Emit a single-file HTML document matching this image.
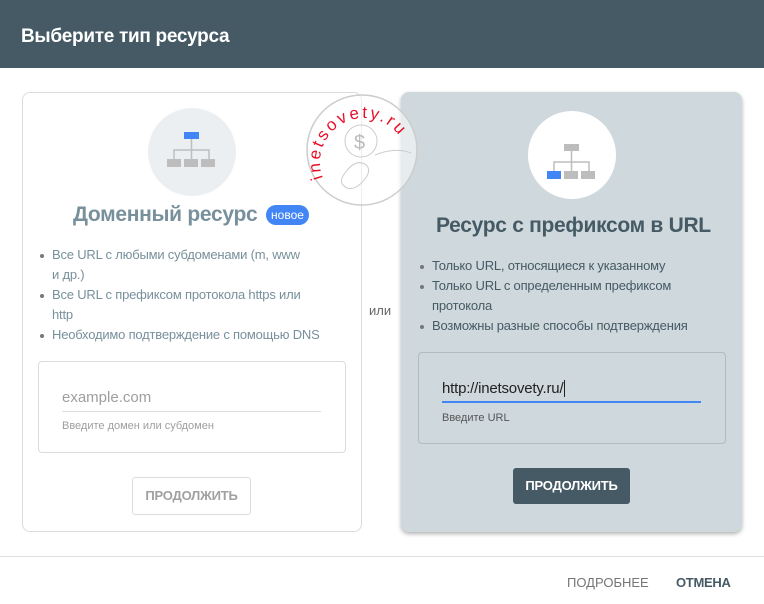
<!DOCTYPE html>
<html><head><meta charset="utf-8"><style>
*{margin:0;padding:0;box-sizing:border-box}
body{width:764px;height:604px;background:#fff;font-family:"Liberation Sans",sans-serif;position:relative;overflow:hidden}
.abs{position:absolute}
.hdr{left:0;top:0;width:764px;height:68px;background:#455a64;color:#fff;font-size:19px;font-weight:bold;padding:26px 0 0 21px;letter-spacing:-0.3px}
.card{border-radius:8px}
ul{list-style:none;font-size:13px;line-height:20px;letter-spacing:-0.2px}
li{position:relative;padding-left:14px}
li:before{content:"";position:absolute;left:2px;top:9px;width:4px;height:4px;border-radius:50%;background:#777}
.btn{font-size:13px;font-weight:bold;text-align:center;border-radius:3px;letter-spacing:-0.2px}
</style></head><body>
<div class="abs hdr">Выберите тип ресурса</div>

<div class="abs card" style="left:22px;top:92px;width:340px;height:440px;border:1px solid #dadce0"></div>
<div class="abs" style="left:148px;top:108px;width:88px;height:88px;border-radius:50%;background:#eceff1"></div>
<svg class="abs" style="left:166px;top:130px" width="52" height="40">
<rect x="18" y="2" width="15" height="7" fill="#4285f4"/>
<path d="M25.5 9V20M8 29V20H43V29M25.5 20V29" stroke="#bdbdbd" stroke-width="1.5" fill="none"/>
<rect x="1" y="29" width="14" height="8" fill="#bdbdbd"/><rect x="18" y="29" width="14" height="8" fill="#bdbdbd"/><rect x="35" y="29" width="14" height="8" fill="#bdbdbd"/>
</svg>
<div class="abs" style="left:73px;top:203px;font-size:21px;font-weight:bold;color:#78909c;letter-spacing:-0.3px">Доменный ресурс</div>
<div class="abs" style="left:266px;top:205px;width:43px;height:20px;border-radius:10px;background:#4285f4;color:#fff;font-size:12px;text-align:center;line-height:20px">новое</div>
<ul class="abs" style="left:38px;top:245px;width:285px;color:#78909c">
<li>Все URL с любыми субдоменами (m, www и&nbsp;др.)</li>
<li>Все URL с префиксом протокола https или http</li>
<li>Необходимо подтверждение с помощью DNS</li></ul>
<div class="abs" style="left:38px;top:361px;width:308px;height:92px;border:1px solid #dadce0;border-radius:4px"></div>
<div class="abs" style="left:62px;top:389px;font-size:15px;color:#9e9e9e">example.com</div>
<div class="abs" style="left:62px;top:411px;width:259px;height:1px;background:#ddd"></div>
<div class="abs" style="left:62px;top:420px;font-size:11px;color:#9e9e9e">Введите домен или субдомен</div>
<div class="abs btn" style="left:132px;top:477px;width:119px;height:38px;border:1px solid #dadce0;color:#a0a0a0;line-height:36px">ПРОДОЛЖИТЬ</div>

<div class="abs" style="left:369px;top:303px;font-size:13px;color:#666">или</div>

<div class="abs card" style="left:401px;top:92px;width:341px;height:440px;background:#cfd8dc;box-shadow:0 2px 4px rgba(0,0,0,.3)"></div>
<div class="abs" style="left:528px;top:111px;width:88px;height:88px;border-radius:50%;background:#fff"></div>
<svg class="abs" style="left:546px;top:142px" width="52" height="40">
<rect x="18" y="2" width="15" height="7" fill="#bdbdbd"/>
<path d="M25.5 9V20M8 29V20H43V29M25.5 20V29" stroke="#bdbdbd" stroke-width="1.5" fill="none"/>
<rect x="1" y="29" width="14" height="8" fill="#4285f4"/><rect x="18" y="29" width="14" height="8" fill="#bdbdbd"/><rect x="35" y="29" width="14" height="8" fill="#bdbdbd"/>
</svg>
<div class="abs" style="left:436px;top:214px;font-size:21px;font-weight:bold;color:#455a64;letter-spacing:-0.3px">Ресурс с префиксом в URL</div>
<ul class="abs" style="left:418px;top:256px;width:295px;color:#455a64">
<li>Только URL, относящиеся к указанному</li>
<li>Только URL с определенным префиксом протокола</li>
<li>Возможны разные способы подтверждения</li></ul>
<div class="abs" style="left:418px;top:352px;width:308px;height:92px;border:1px solid #b0bcc2;border-radius:4px"></div>
<div class="abs" style="left:442px;top:380px;font-size:15px;color:#222;letter-spacing:-0.2px">http://inetsovety.ru/<span style="border-left:1px solid #222;margin-left:1px"></span></div>
<div class="abs" style="left:442px;top:401px;width:259px;height:2px;background:#4285f4"></div>
<div class="abs" style="left:442px;top:412px;font-size:11px;color:#555">Введите URL</div>
<div class="abs btn" style="left:513px;top:468px;width:117px;height:36px;background:#455a64;color:#fff;line-height:36px">ПРОДОЛЖИТЬ</div>

<div class="abs" style="left:0;top:556px;width:764px;height:1px;background:#e0e0e0"></div>
<div class="abs" style="left:567px;top:575px;font-size:13px;color:#757575">ПОДРОБНЕЕ</div>
<div class="abs" style="left:676px;top:575px;font-size:13px;color:#455a64;font-weight:bold;letter-spacing:-0.3px">ОТМЕНА</div>

<svg class="abs" style="left:305px;top:93px" width="115" height="115">
<circle cx="57" cy="57" r="55" fill="rgba(255,255,255,0.5)" stroke="#ccc" stroke-width="1.5"/>
<circle cx="56" cy="48" r="16" fill="none" stroke="#ccc"/>
<text x="49" y="56" font-size="20" fill="#bbb" font-family="Liberation Sans">$</text>
<path d="M40 80q-8 10 2 15q10 3 20-12q4-8-2-12q-10-5-20 9z" fill="none" stroke="#ccc"/>
<path d="M70 62q20-8 36-2" fill="none" stroke="#ccc"/>
<defs><path id="arc" d="M18 85A44 44 0 1 1 100 85"/></defs>
<text font-size="17" fill="#e8102a" font-family="Liberation Sans" letter-spacing="2.5">
<textPath href="#arc">inetsovety.ru</textPath></text>
</svg>
</body></html>
